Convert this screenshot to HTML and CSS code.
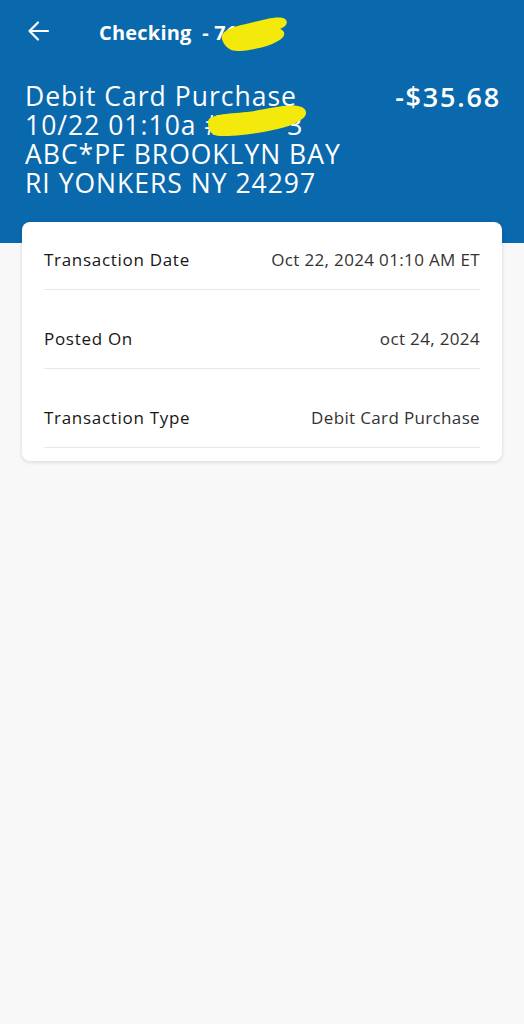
FILE: index.html
```html
<!DOCTYPE html>
<html lang="en">
<head>
<meta charset="utf-8">
<title>Transaction Details</title>
<link rel="stylesheet" href="styles.css">
</head>
<body>
<div class="page">
  <header class="hero">
    <div class="topbar">
      <svg class="back" width="24" height="24" viewBox="0 0 24 24" aria-hidden="true">
        <path d="M22 12H3.5M12 3.5L3.5 12L12 20.5" fill="none" stroke="#fff" stroke-width="2.2" stroke-linecap="round" stroke-linejoin="round"/>
      </svg>
      <div class="account">Checking <span class="acct-num">&nbsp;- 71<span class="hidden">xx</span></span>
        <svg class="blob blob-a" width="72" height="38" viewBox="0 0 72 38" aria-hidden="true">
          <path d="M4 24 C2 16 14 12 28 9 C42 6 56 1 65 3 C71 5 70 11 62 14 C68 16 68 22 60 26 C50 32 34 35 22 36 C12 37 6 31 4 24 Z" fill="#f3ea0c"/>
        </svg>
      </div>
    </div>
    <div class="summary">
      <div class="desc">
        <div class="line">Debit Card Purchase</div>
        <div class="line">10/22 01:10a #<span class="hidden">0000</span>3
          <svg class="blob blob-b" width="104" height="34" viewBox="0 0 104 34" aria-hidden="true">
            <path d="M3 20 C2 11 22 11 42 9 C60 7 78 1 93 3 C103 5 103 12 97 16 C92 20 84 24 68 27 C50 31 30 33 15 33 C7 33 3 28 3 20 Z" fill="#f3ea0c"/>
          </svg>
        </div>
        <div class="line">ABC*PF BROOKLYN BAY</div>
        <div class="line">RI YONKERS NY 24297</div>
      </div>
      <div class="amount">-$35.68</div>
    </div>
  </header>

  <main class="card">
    <div class="row">
      <span class="label">Transaction Date</span>
      <span class="value">Oct 22, 2024 01:10 AM ET</span>
    </div>
    <div class="row">
      <span class="label">Posted On</span>
      <span class="value">oct 24, 2024</span>
    </div>
    <div class="row">
      <span class="label">Transaction Type</span>
      <span class="value">Debit Card Purchase</span>
    </div>
  </main>
</div>
</body>
</html>
```
FILE: styles.css
```css
* { box-sizing: border-box; }
html, body {
  margin: 0;
  padding: 0;
  background: #f8f8f8;
  font-family: "Open Sans", "Noto Sans", sans-serif;
}
.page {
  width: 524px;
  min-height: 1024px;
  background: #f8f8f8;
}
.hero {
  background: #0a69ac;
  color: #fff;
  padding: 0 25px 0 25px;
  height: 243px;
}
.topbar {
  height: 64px;
  display: flex;
  align-items: center;
  padding-left: 1px;
}
.back {
  display: block;
  margin-top: -2px;
}
.account {
  position: relative;
  margin-left: 49px;
  font-size: 20px;
  font-weight: 700;
  letter-spacing: 0.2px;
}
.acct-num { white-space: pre; }
.hidden { color: transparent; }
.blob {
  position: absolute;
}
.blob-a {
  left: 119px;
  top: -4px;
}
.summary {
  display: flex;
  justify-content: space-between;
  align-items: flex-start;
  margin-top: 18px;
}
.desc {
  font-size: 26.5px;
  line-height: 29px;
  font-weight: 400;
  letter-spacing: 1px;
}
.line { position: relative; white-space: nowrap; }
.blob-b {
  left: 180px;
  top: -8px;
}
.amount {
  font-size: 27px;
  line-height: 29px;
  font-weight: 600;
  letter-spacing: 1.8px;
  margin-right: -2px;
}
.card {
  position: relative;
  margin: -21px 22px 0 22px;
  background: #fff;
  border-radius: 8px;
  box-shadow: 0 1px 4px rgba(0,0,0,0.14);
  padding: 0 22px 13px 22px;
}
.row {
  display: flex;
  justify-content: space-between;
  align-items: flex-end;
  height: 79px;
  padding-bottom: 18px;
  border-bottom: 1px solid #e8e8e8;
  font-size: 17px;
  line-height: 22px;
}
.row:first-child { height: 68px; }
.label { color: #161616; letter-spacing: 0.7px; }
.value { color: #333; letter-spacing: 0.35px; }
```
